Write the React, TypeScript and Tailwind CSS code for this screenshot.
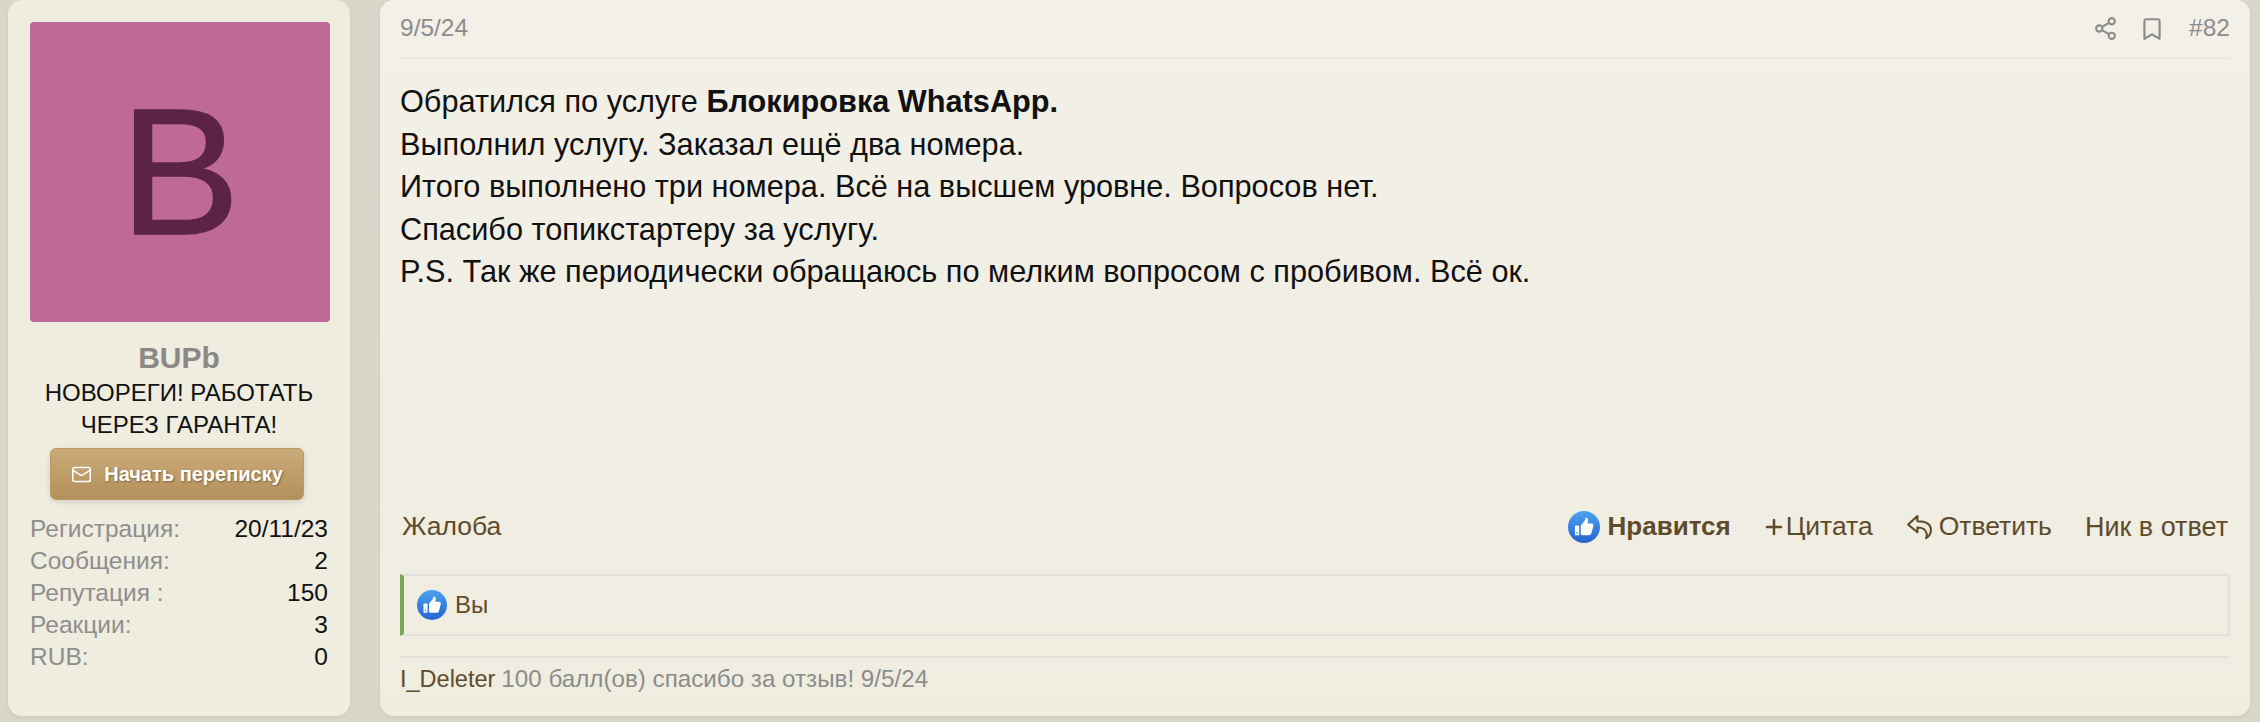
import { Bookmark, Mail, Plus, Share2 } from "lucide-react";

const stats = [
  { label: "Регистрация:", value: "20/11/23" },
  { label: "Сообщения:", value: "2" },
  { label: "Репутация :", value: "150" },
  { label: "Реакции:", value: "3" },
  { label: "RUB:", value: "0" },
];

const lines = [
  "Выполнил услугу. Заказал ещё два номера.",
  "Итого выполнено три номера. Всё на высшем уровне. Вопросов нет.",
  "Спасибо топикстартеру за услугу.",
  "P.S. Так же периодически обращаюсь по мелким вопросом с пробивом. Всё ок.",
];

// Blue round "like" badge
function LikeIcon({ id, className }: { id: string; className: string }) {
  return (
    <svg viewBox="0 0 30 30" className={className}>
      <defs>
        <linearGradient id={id} x1="0" y1="0" x2="0" y2="1">
          <stop offset="0" stopColor="#4ba3f0" />
          <stop offset="1" stopColor="#2563cf" />
        </linearGradient>
      </defs>
      <circle cx="15" cy="15" r="15" fill={`url(#${id})`} />
      <path
        d="M12 13.5 L15.2 9.8 C16 8.8 16.3 7.6 16.4 6.4 C17.9 6.2 19 7.4 18.8 9.2 L18.3 11.8 L22.2 11.8 C23.5 11.8 24.2 13 23.8 14 L21.8 21.2 C21.5 22.2 20.7 22.8 19.7 22.8 L14 22.8 C13 22.8 12 22.3 12 22.3 Z"
        fill="#fff"
      />
      <rect x="6.5" y="13.5" width="4" height="9.3" rx="0.8" fill="#fff" />
      <rect x="7.9" y="19.6" width="1.2" height="1.6" fill="#3b82dc" />
    </svg>
  );
}

function ReplyIcon() {
  return (
    <svg viewBox="0 0 26 26" className="h-[27px] w-[27px]" fill="none" stroke="#5f4b2b" strokeWidth="2" strokeLinejoin="round">
      <path d="M11 3 L2 11 L11 18.5 L11 14 C15.5 14 19 15.5 20 20 C20.3 21.5 20 23 19.3 24.3 C22 22.5 24 20 24 16.5 C24 11 19 8 11 8 Z" />
    </svg>
  );
}

export default function App() {
  return (
    <div className="flex h-[722px] w-[2260px] gap-[30px] bg-[#d9d6ca] pr-[10px] pb-[6px] pl-[8px] font-['Liberation_Sans',Arial,sans-serif]">
      <aside className="flex w-[342px] shrink-0 flex-col rounded-[14px] bg-[#efece0] px-[22px] pt-[22px] shadow-[0_2px_4px_rgba(0,0,0,0.06)]">
        <div className="flex h-[300px] w-[300px] items-center justify-center rounded-[4px] bg-[#be6996] text-[180px] leading-none text-[#5c2444] [-webkit-text-stroke:1.5px_#5c2444]">
          B
        </div>
        <div className="mt-[19px] text-center text-[30px] font-bold leading-[33px] text-[#8c8885]">BUPb</div>
        <div className="mx-auto mt-[3px] w-[290px] text-center text-[24px] leading-[32px] text-[#111]">
          НОВОРЕГИ! РАБОТАТЬ ЧЕРЕЗ ГАРАНТА!
        </div>
        <div className="ml-[20px] mt-[7px] flex h-[52px] w-[254px] items-center justify-center gap-[12px] rounded-[6px] border border-[#bd9a61] bg-linear-to-b from-[#cbab79] to-[#b4905a] text-[20px] font-bold text-white shadow-[0_2px_6px_rgba(0,0,0,0.12)] [text-shadow:1px_1px_2px_rgba(0,0,0,0.35)]">
          <Mail size={21} strokeWidth={1.8} />
          Начать переписку
        </div>
        <dl className="mt-[13px] text-[24.5px] leading-[32px]">
          {stats.map((s) => (
            <div key={s.label} className="flex justify-between">
              <dt className="text-[#8e8e8e]">{s.label}</dt>
              <dd className="text-[#111]">{s.value}</dd>
            </div>
          ))}
        </dl>
      </aside>

      <main className="flex flex-1 flex-col rounded-[14px] bg-linear-to-b from-[#f3f0e8] to-[#efece0] px-[20px] pb-[15px] shadow-[0_2px_4px_rgba(0,0,0,0.06)]">
        <header className="flex h-[59px] items-center justify-between border-b-2 border-[#e9e8e2] text-[#8c8c8c]">
          <span className="text-[24.5px]">9/5/24</span>
          <div className="flex items-center">
            <Share2 size={25} strokeWidth={2} />
            <Bookmark size={26} strokeWidth={2} className="ml-[21px]" />
            <span className="ml-[24px] text-[24.5px]">#82</span>
          </div>
        </header>
        <article className="mt-[22px] flex-1 text-[30.7px] leading-[42.5px] text-[#111]">
          <p>
            Обратился по услуге <b>Блокировка WhatsApp.</b>
          </p>
          {lines.map((l) => (
            <p key={l}>{l}</p>
          ))}
        </article>
        <div className="flex items-center justify-between px-[2px] text-[26.5px] text-[#5f4b2b]">
          <span>Жалоба</span>
          <div className="flex items-center">
            <LikeIcon id="like-a" className="h-[32px] w-[32px]" />
            <b className="ml-[8px] text-[26px]">Нравится</b>
            <Plus size={24} strokeWidth={2.5} className="ml-[31px]" />
            <span>Цитата</span>
            <span className="ml-[33px]">
              <ReplyIcon />
            </span>
            <span className="ml-[6px]">Ответить</span>
            <span className="ml-[33px] text-[27px]">Ник в ответ</span>
          </div>
        </div>
        <div className="mt-[27px] flex h-[62px] items-center border-2 border-l-4 border-[#e2e1de] border-l-[#7ea657] pl-[13px] text-[24px] text-[#5f4b2b]">
          <LikeIcon id="like-b" className="h-[30px] w-[30px]" />
          <span className="ml-[8px]">Вы</span>
        </div>
        <div className="mt-[20px] flex h-[45px] items-center border-t-2 border-[#e2e1de] text-[24.2px] text-[#8c8c8c]">
          <span className="text-[23.5px] text-[#5f4b2b]">I_Deleter</span>
          <span className="ml-[6px]">100 балл(ов) спасибо за отзыв! 9/5/24</span>
        </div>
      </main>
    </div>
  );
}
